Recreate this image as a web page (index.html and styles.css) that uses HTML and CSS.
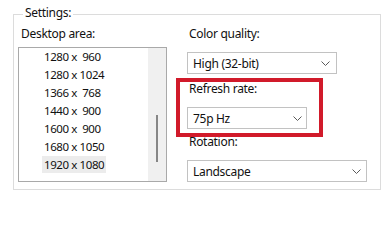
FILE: index.html
```html
<!DOCTYPE html>
<html lang="en">
<head>
<meta charset="utf-8">
<title>Settings</title>
<link rel="stylesheet" href="styles.css">
</head>
<body>
<fieldset class="settings">
  <legend class="legend">Settings:</legend>
  <div class="cols">
    <div class="left">
      <div class="label">Desktop area:</div>
      <div class="listbox">
        <ul class="items">
          <li><span>1280 x  960</span></li>
          <li><span>1280 x 1024</span></li>
          <li><span>1366 x  768</span></li>
          <li><span>1440 x  900</span></li>
          <li><span>1600 x  900</span></li>
          <li><span>1680 x 1050</span></li>
          <li class="selected"><span>1920 x 1080</span></li>
        </ul>
        <div class="scroll"><div class="thumb"></div></div>
      </div>
    </div>
    <div class="right">
      <div class="label">Color quality:</div>
      <div class="combo combo-color">
        <span class="value">High (32-bit)</span>
        <svg class="chev" width="9" height="5" viewBox="0 0 9 5"><polyline points="0.5,0.5 4.5,4.5 8.5,0.5" fill="none" stroke="#5a5a5a" stroke-width="1"/></svg>
      </div>
      <div class="label label-refresh">Refresh rate:</div>
      <div class="combo combo-rate">
        <span class="value">75p Hz</span>
        <svg class="chev" width="9" height="5" viewBox="0 0 9 5"><polyline points="0.5,0.5 4.5,4.5 8.5,0.5" fill="none" stroke="#5a5a5a" stroke-width="1"/></svg>
      </div>
      <div class="label label-rotation">Rotation:</div>
      <div class="combo combo-rotation">
        <span class="value">Landscape</span>
        <svg class="chev" width="9" height="5" viewBox="0 0 9 5"><polyline points="0.5,0.5 4.5,4.5 8.5,0.5" fill="none" stroke="#5a5a5a" stroke-width="1"/></svg>
      </div>
      <div class="highlight"></div>
    </div>
  </div>
</fieldset>
</body>
</html>
```

FILE: styles.css
```css
* { box-sizing: border-box; }
html, body {
  margin: 0;
  padding: 0;
  background: #ffffff;
}
body {
  font-family: "Noto Sans", "Open Sans", sans-serif;
  font-size: 12px;
  letter-spacing: -0.3px;
  color: #111111;
}
.settings {
  margin: 5px 0 0 13px;
  width: 368px;
  border: 1px solid #dcdcdc;
  padding: 3px 0 7px 4px;
  min-width: 0;
}
.legend {
  padding: 0 2px 3px 2px;
  margin-left: 5px;
  line-height: 15px;
}
.cols {
  display: grid;
  grid-template-columns: 149px 1fr;
  column-gap: 20px;
}
.label {
  line-height: 16px;
  padding-left: 2px;
}
.left .label { padding-left: 3px; }
.listbox {
  margin-top: 5px;
  height: 135px;
  border: 1px solid #a9a9a9;
  display: flex;
}
.items {
  list-style: none;
  margin: 0;
  padding: 0 0 0 23px;
  flex: 1;
  font-size: 11.5px;
  letter-spacing: -0.4px;
}
.items li {
  height: 18px;
  line-height: 18px;
  white-space: pre;
}
.items li span { padding: 1px 2px; }
.items li.selected span { background: #ececec; }
.scroll {
  width: 18px;
  background: #f0f0f0;
  display: flex;
  justify-content: center;
}
.thumb {
  margin-top: 67px;
  width: 2px;
  height: 47px;
  background: #868686;
}
.right { position: relative; }
.combo {
  margin-top: 10px;
  height: 22px;
  border: 1px solid #c2c2c2;
  background: #ffffff;
  display: flex;
  align-items: center;
  justify-content: space-between;
  padding: 0 6px 0 5px;
}
.combo-color { width: 150px; }
.combo-rate { width: 120px; padding-right: 4px; }
.combo-rotation { width: 180px; padding-right: 5px; }
.label-refresh { margin-top: 7px; }
.label-rotation { margin-top: 5px; }
.chev { display: block; }
.highlight {
  position: absolute;
  left: -11px;
  top: 52px;
  width: 147px;
  height: 59px;
  border: 4px solid #d11a2a;
}
```
